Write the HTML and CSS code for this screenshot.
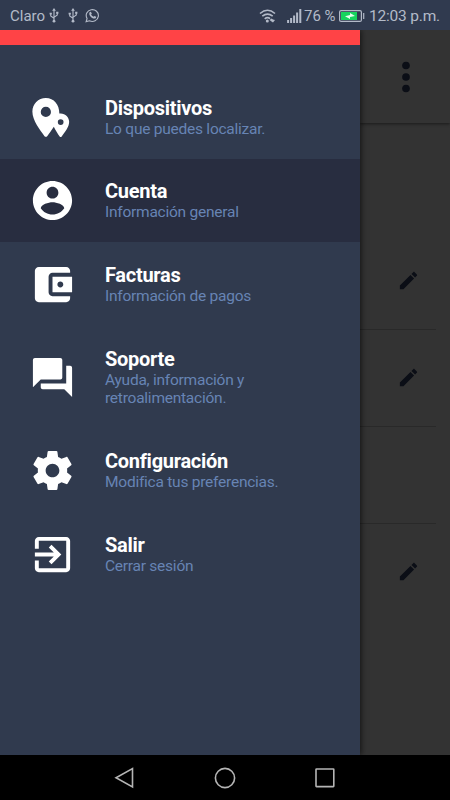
FILE: index.html
```html
<!DOCTYPE html>
<html lang="es">
<head>
<meta charset="utf-8">
<title>Menú</title>
<link rel="stylesheet" href="styles.css">
</head>
<body>
<div class="phone">
  <header class="status">
    <span class="carrier">Claro</span>
    <svg class="usb" viewBox="0 0 10 16"><path d="M5 2V14M1.500 6v2.500L5 11M8.500 5v2.500L5 10"/><path class="solid" d="M5 0l2 3H3zM.3 5h2.400v2H.3zM7.300 4h2.400v2H7.300z"/><circle class="solid" cx="5" cy="14" r="1.500"/></svg>
    <svg class="usb second" viewBox="0 0 10 16"><path d="M5 2V14M1.500 6v2.500L5 11M8.500 5v2.500L5 10"/><path class="solid" d="M5 0l2 3H3zM.3 5h2.400v2H.3zM7.300 4h2.400v2H7.300z"/><circle class="solid" cx="5" cy="14" r="1.500"/></svg>
    <svg class="whats" viewBox="0 0 16 16"><path d="M1.200 14.500l1-3.300A6.500 6.300 0 1 1 4.800 13.600z"/><path class="solid" d="M5.200 4.200l1.100-.2 1 2-.8 1c.6 1.200 1.500 1.900 2.600 2.400l.9-1 2 1c0 1.500-1.200 2-2.200 1.900C7 10.900 4.600 8 4.500 6c0-.8.2-1.400.7-1.800z"/></svg>
    <span class="space"></span>
    <svg class="wifi" viewBox="0 0 18 14"><path d="M1 4.500Q8.500-2 16 4.500M3.300 7.200q5.200-4.300 10.400 0M5.700 9.800q2.800-2.400 5.400-.2"/><circle class="solid" cx="8.300" cy="12" r="1.500"/><path class="solid" d="M10.500 11l2-1.500 1.500 1 2 .5-2 2.500-1.500-1z"/></svg>
    <svg class="signal" viewBox="0 0 15 14"><path d="M1.100 11v3M4.100 9v5M7.100 6.500V14M10.100 3.500V14M13.300 0v14"/></svg>
    <span class="percent">76 %</span>
    <svg class="battery" viewBox="0 0 26 12"><rect class="frame" x=".6" y=".6" width="21.800" height="10.800" rx="1.500"/><rect class="charge" x="2" y="2" width="16" height="8"/><path class="bolt" d="M6 6.200l5-1.200V3l5 3-5 1v2z"/><path class="tip" d="M24.700 3v6"/></svg>
    <span class="clock">12:03 p.m.</span>
  </header>
  <div class="stage">
    <nav class="drawer">
      <div class="banner"></div>
      <ul class="menu">
        <li class="item">
          <svg class="icon" viewBox="0 0 46 46"><path fill-rule="evenodd" d="M16.500 4C9 4 3.300 9.800 3.300 17.200c0 8.800 7.700 18.500 11.700 23.800.8 1.200 2.200 1.200 3 0 2-2.700 4.400-5.900 6.300-8.900 1.700 3.600 4 7.100 5.700 9.400q1 1.400 2 0c3.100-4.100 7.300-9.200 7.300-14.300 0-4.500-3.600-8.100-8.300-8.200h-1.300C29.700 10.500 24.500 4 16.500 4zm0 8.500a5 5 0 1 1 0 10 5 5 0 0 1 0-10zM31 24.700a2.800 2.800 0 1 1 0 5.600 2.800 2.800 0 0 1 0-5.600z"/></svg>
          <div class="label"><b>Dispositivos</b><span>Lo que puedes localizar.</span></div>
        </li>
        <li class="item active">
          <svg class="icon" viewBox="0 0 24 24"><path d="M12 2C6.480 2 2 6.480 2 12s4.480 10 10 10 10-4.480 10-10S17.520 2 12 2zm0 3c1.660 0 3 1.340 3 3s-1.340 3-3 3-3-1.340-3-3 1.340-3 3-3zm0 14.200c-2.500 0-4.710-1.280-6-3.220.03-1.990 4-3.080 6-3.080 1.990 0 5.970 1.090 6 3.080-1.290 1.940-3.500 3.220-6 3.220z"/></svg>
          <div class="label"><b>Cuenta</b><span>Información general</span></div>
        </li>
        <li class="item">
          <svg class="icon" viewBox="0 0 24 24"><path d="M21 18v1c0 1.100-.9 2-2 2H5c-1.110 0-2-.9-2-2V5c0-1.100.89-2 2-2h14c1.100 0 2 .9 2 2v1h-9c-1.110 0-2 .9-2 2v8c0 1.100.89 2 2 2h9zm-9-2h10V8H12v8zm4-2.500c-.83 0-1.500-.67-1.500-1.500s.67-1.500 1.500-1.500 1.500.67 1.500 1.500-.67 1.500-1.500 1.500z"/></svg>
          <div class="label"><b>Facturas</b><span>Información de pagos</span></div>
        </li>
        <li class="item tall">
          <svg class="icon" viewBox="0 0 24 24"><path d="M21 6h-2v9H6v2c0 .55.45 1 1 1h11l4 4V7c0-.55-.45-1-1-1zm-4 6V3c0-.55-.45-1-1-1H3c-.55 0-1 .45-1 1v14l4-4h10c.55 0 1-.45 1-1z"/></svg>
          <div class="label"><b>Soporte</b><span>Ayuda, información y<br>retroalimentación.</span></div>
        </li>
        <li class="item">
          <svg class="icon" viewBox="0 0 24 24"><path d="M19.430 12.980c.04-.32.07-.64.07-.98s-.03-.66-.07-.98l2.110-1.650c.19-.15.24-.42.12-.64l-2-3.460c-.12-.22-.39-.3-.61-.22l-2.490 1c-.52-.4-1.080-.73-1.690-.98l-.38-2.650C14.460 2.180 14.250 2 14 2h-4c-.25 0-.46.18-.49.42l-.38 2.650c-.61.25-1.170.59-1.690.98l-2.490-1c-.23-.09-.49 0-.61.22l-2 3.460c-.13.22-.07.49.12.64l2.110 1.650c-.04.32-.07.65-.07.98s.03.66.07.98l-2.110 1.650c-.19.15-.24.42-.12.64l2 3.460c.12.22.39.3.61.22l2.490-1c.52.4 1.080.73 1.690.98l.38 2.650c.03.24.24.42.49.42h4c.25 0 .46-.18.49-.42l.38-2.650c.61-.25 1.170-.59 1.690-.98l2.490 1c.23.09.49 0 .61-.22l2-3.460c.12-.22.07-.49-.12-.64l-2.110-1.650zM12 15.500c-1.930 0-3.500-1.570-3.500-3.500s1.570-3.500 3.500-3.500 3.500 1.570 3.500 3.500-1.570 3.500-3.500 3.500z"/></svg>
          <div class="label"><b>Configuración</b><span>Modifica tus preferencias.</span></div>
        </li>
        <li class="item">
          <svg class="icon" viewBox="0 0 24 24"><path d="M10.090 15.590L11.500 17l5-5-5-5-1.410 1.410L12.670 11H3v2h9.670l-2.580 2.590zM19 3H5c-1.110 0-2 .9-2 2v4h2V5h14v14H5v-4H3v4c0 1.100.89 2 2 2h14c1.100 0 2-.9 2-2V5c0-1.100-.9-2-2-2z"/></svg>
          <div class="label"><b>Salir</b><span>Cerrar sesión</span></div>
        </li>
      </ul>
    </nav>
    <main class="page">
      <div class="toolbar"><svg class="more" viewBox="0 0 24 24"><circle cx="12" cy="6" r="2"/><circle cx="12" cy="12" r="2"/><circle cx="12" cy="18" r="2"/></svg></div>
      <div class="row first"><svg class="pencil" viewBox="0 0 24 24"><path d="M3 17.250V21h3.750L17.810 9.940l-3.750-3.750L3 17.250zM20.710 7.040c.39-.39.39-1.020 0-1.410l-2.340-2.340c-.39-.39-1.020-.39-1.410 0l-1.830 1.830 3.750 3.750 1.830-1.830z"/></svg></div>
      <div class="row"><svg class="pencil" viewBox="0 0 24 24"><path d="M3 17.250V21h3.750L17.810 9.940l-3.750-3.750L3 17.250zM20.710 7.040c.39-.39.39-1.020 0-1.410l-2.340-2.340c-.39-.39-1.020-.39-1.410 0l-1.830 1.830 3.750 3.750 1.830-1.830z"/></svg></div>
      <div class="row"></div>
      <div class="row last"><svg class="pencil" viewBox="0 0 24 24"><path d="M3 17.250V21h3.750L17.810 9.940l-3.750-3.750L3 17.250zM20.710 7.040c.39-.39.39-1.020 0-1.410l-2.340-2.340c-.39-.39-1.020-.39-1.410 0l-1.830 1.830 3.750 3.750 1.830-1.830z"/></svg></div>
    </main>
  </div>
  <footer class="navbar">
    <svg viewBox="0 0 22 22"><path d="M18.500 1.500v18.500L2 10.800z"/></svg>
    <svg viewBox="0 0 22 22"><circle cx="11" cy="11" r="9.600"/></svg>
    <svg viewBox="0 0 22 22"><rect x="2" y="2" width="17.800" height="17.600" rx=".5"/></svg>
  </footer>
</div>
</body>
</html>
```
FILE: styles.css
```css
* { box-sizing: border-box; }

body {
  margin: 0;
  font-family: Roboto, sans-serif;
}

.phone {
  display: flex;
  flex-direction: column;
  width: 450px;
  height: 800px;
  overflow: hidden;
  background: #333;
}

.status {
  z-index: 2;
  display: flex;
  align-items: center;
  height: 30px;
  padding: 1px 10px 0;
  background: #303a4f;
  color: #b3bac8;
  white-space: nowrap;
}

.status svg {
  flex: none;
  fill: none;
  stroke: #b3bac8;
  stroke-width: 1.2;
}

.status .solid { fill: #b3bac8; stroke: none; }
.carrier { width: 34px; font-size: 15px; }
.usb { width: 10px; height: 15px; margin-left: 5px; }
.usb.second { margin-left: 9px; }
.whats { width: 15px; height: 15px; margin-left: 7px; }
.space { flex: 1; }
.status .wifi { width: 18px; height: 14px; margin-right: 10px; stroke-width: 1.6; }
.status .signal { width: 15px; height: 14px; margin-right: 2px; stroke-width: 2; }
.percent { width: 31px; font-size: 15px; margin-right: 4px; }
.battery { width: 26px; height: 12px; margin-right: 4px; }
.status .battery .charge { fill: #16d45e; stroke: none; }
.status .battery .bolt { fill: #e6fff0; stroke: none; }
.clock { width: 71px; font-size: 15.5px; letter-spacing: -.2px; }

.stage {
  display: flex;
  height: 725px;
}

.drawer {
  z-index: 1;
  width: 360px;
  background: #303a4e;
  box-shadow: 1px 0 6px rgba(0, 0, 0, .65);
}

.banner { height: 15px; background: #ff4346; }

.menu {
  margin: 0;
  padding: 30px 0 0;
  list-style: none;
}

.item {
  display: flex;
  align-items: center;
  height: 84px;
  padding-left: 29px;
}

.item.active { height: 83px; background: #282d40; }
.item.tall { height: 102px; }

.icon {
  flex: none;
  width: 47px;
  height: 47px;
  margin-right: 29px;
  fill: #fff;
}

.label { display: flex; flex-direction: column; padding-top: 1px; }
.label b { color: #fff; font-size: 20px; line-height: 23px; letter-spacing: -.28px; }
.label span { color: #6784b4; font-size: 15.5px; line-height: 18.5px; letter-spacing: -.24px; }

.page { flex: 1; background: #333; }

.toolbar {
  display: flex;
  justify-content: flex-end;
  align-items: center;
  height: 93px;
  padding-right: 21px;
  box-shadow: 0 1px 3px rgba(0, 0, 0, .5);
}

.more { width: 46px; height: 46px; fill: #0b0e16; }

.row {
  display: flex;
  align-items: center;
  justify-content: flex-end;
  height: 97px;
  margin-right: 14px;
  padding: 0 16px 2px 0;
  border-bottom: 1px solid #292929;
}

.row.first { height: 207px; padding-top: 110px; }
.row.last { border-bottom: 0; }
.pencil { width: 23px; height: 23px; fill: #0b0e16; }

.navbar {
  display: flex;
  justify-content: center;
  align-items: center;
  gap: 78px;
  height: 45px;
  background: #000;
}

.navbar svg {
  width: 22px;
  height: 22px;
  fill: none;
  stroke: #b5b5b5;
  stroke-width: 1.6;
}
```
